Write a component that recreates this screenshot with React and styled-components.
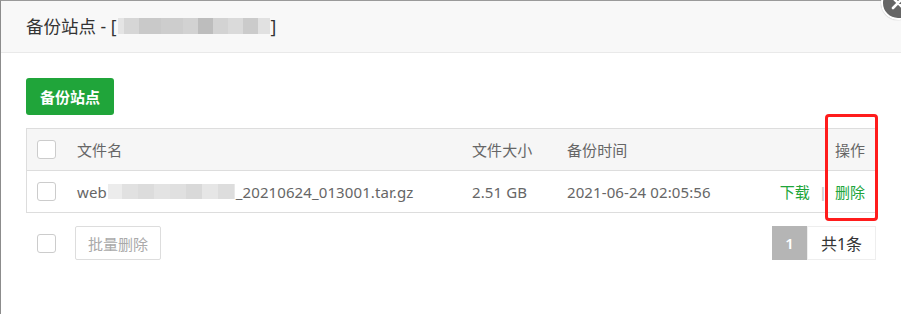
import styled, { createGlobalStyle } from "styled-components"

const GlobalStyle = createGlobalStyle`
*{
  padding: 0;
  margin: 0;
  box-sizing: border-box;
}

body {
  font-family: "Noto Sans", "Noto Sans CJK SC", sans-serif;
  color: #666;
  background: #fff;
}
`

const titleBlur = [
	[6, "#e4e4e4"],
	[15, "#d6d6d6"],
	[22, "#c9c9c9"],
	[22, "#cdcdcd"],
	[15, "#d2d2d2"],
	[15, "#bdbdbd"],
	[15, "#d3d3d3"],
	[15, "#dadada"],
	[15, "#cbcbcb"],
	[12, "#e1e1e1"],
]

const nameBlur = [
	[14, "#ececec"],
	[16, "#e1e1e1"],
	[16, "#dcdcdc"],
	[16, "#e3e3e3"],
	[16, "#e0e0e0"],
	[16, "#d9d9d9"],
	[16, "#e6e6e6"],
	[16, "#dddddd"],
	[1, "#e8e8e8"],
]

function Mosaic({ blocks, height }) {
	return (
		<MosaicWrap $h={height}>
			{blocks.map(([w, c], i) => (
				<MosaicBlock key={i} $w={w} $c={c} />
			))}
		</MosaicWrap>
	)
}

function App() {
	return (
		<Page>
			<GlobalStyle />
			<Dialog>
				<Header>
					<span>备份站点 - [</span>
					<Mosaic blocks={titleBlur} height={16} />
					<span>]</span>
				</Header>
				<Body>
					<GreenButton>备份站点</GreenButton>
					<Table>
						<Row $head>
							<CheckCell>
								<Check />
							</CheckCell>
							<Cell>文件名</Cell>
							<Cell>文件大小</Cell>
							<Cell>备份时间</Cell>
							<ActionCell>操作</ActionCell>
						</Row>
						<Row>
							<CheckCell>
								<Check />
							</CheckCell>
							<Cell>
								web
								<Mosaic blocks={nameBlur} height={15} />
								_20210624_013001.tar.gz
							</Cell>
							<Cell>2.51 GB</Cell>
							<Cell>2021-06-24 02:05:56</Cell>
							<ActionCell>
								<Link>下载</Link>
								<Sep>|</Sep>
								<Link>删除</Link>
							</ActionCell>
						</Row>
					</Table>
					<Footer>
						<FooterLeft>
							<Check />
							<GhostButton>批量删除</GhostButton>
						</FooterLeft>
						<Pager>
							<PageNum>1</PageNum>
							<PageTotal>共1条</PageTotal>
						</Pager>
					</Footer>
				</Body>
			</Dialog>
			<Highlight />
			<Close>
				<svg width="14" height="14" viewBox="0 0 14 14">
					<path d="M2 2 L12 12 M12 2 L2 12" stroke="#fff" strokeWidth="2.6" strokeLinecap="round" />
				</svg>
			</Close>
		</Page>
	)
}

export default App

const Page = styled.div`
	position: relative;
	width: 901px;
	height: 314px;
	overflow: hidden;
	background: #fff;
`

const Dialog = styled.div`
	height: 100%;
	border-top: 1px solid #9a9a9a;
	border-left: 1px solid #8c8c8c;
	background: #fff;
`

const Header = styled.div`
	display: flex;
	align-items: center;
	height: 52px;
	padding: 0 0 2px 25px;
	background: #f8f8f8;
	border-bottom: 1px solid #e9e9e9;
	font-size: 17.5px;
	color: #333;
	white-space: pre;
`

const MosaicWrap = styled.span`
	display: inline-flex;
	height: ${(p) => p.$h}px;
	margin: 0 1px;
	filter: blur(0.6px);
`

const MosaicBlock = styled.span`
	width: ${(p) => p.$w}px;
	height: 100%;
	background: ${(p) => p.$c};
`

const Body = styled.div`
	padding: 25px 25px 0 25px;
`

const GreenButton = styled.button`
	display: block;
	width: 88px;
	height: 37px;
	border: none;
	border-radius: 3px;
	background: #20a53a;
	color: #fff;
	font-family: inherit;
	font-size: 15px;
	font-weight: 600;
`

const Table = styled.div`
	margin-top: 13px;
	border: 1px solid #ddd;
`

const Row = styled.div`
	display: grid;
	grid-template-columns: 50px 395px 95px 1fr auto;
	align-items: center;
	height: ${(p) => (p.$head ? "42px" : "41px")};
	background: ${(p) => (p.$head ? "#f6f6f6" : "#fff")};
	border-bottom: ${(p) => (p.$head ? "1px solid #ddd" : "none")};
	font-size: 15px;
	color: #666;
`

const CheckCell = styled.div`
	display: flex;
	padding-left: 10px;
`

const Cell = styled.div`
	display: flex;
	align-items: center;
	white-space: nowrap;
	letter-spacing: 0.1px;
`

const ActionCell = styled.div`
	display: flex;
	align-items: center;
	justify-content: flex-end;
	padding-right: 10px;
`

const Link = styled.span`
	color: #20a53a;
`

const Sep = styled.span`
	margin: 0 8px 0 9px;
	color: #ccc;
	font-weight: 700;
`

const Check = styled.span`
	display: block;
	width: 19px;
	height: 19px;
	border: 1px solid #ccc;
	border-radius: 3px;
	background: #fff;
`

const Footer = styled.div`
	display: flex;
	justify-content: space-between;
	align-items: center;
	margin-top: 13px;
`

const FooterLeft = styled.div`
	display: flex;
	align-items: center;
	gap: 19px;
	padding-left: 11px;
`

const GhostButton = styled.button`
	width: 86px;
	height: 34px;
	border: 1px solid #ddd;
	border-radius: 2px;
	background: #fff;
	color: #aaa;
	font-family: inherit;
	font-size: 15px;
`

const Pager = styled.div`
	display: flex;
	height: 34px;
`

const PageNum = styled.span`
	display: flex;
	align-items: center;
	justify-content: center;
	width: 35px;
	background: #b5b5b5;
	color: #fff;
	font-size: 15px;
	font-weight: 600;
`

const PageTotal = styled.span`
	display: flex;
	align-items: center;
	justify-content: center;
	width: 69px;
	border: 1px solid #eee;
	color: #333;
	font-size: 16px;
`

const Highlight = styled.div`
	position: absolute;
	left: 825px;
	top: 114px;
	width: 53px;
	height: 107px;
	border: 3px solid #ff1c1c;
	border-radius: 4px;
`

const Close = styled.div`
	position: absolute;
	left: 881px;
	top: -14px;
	width: 34px;
	height: 34px;
	display: flex;
	align-items: center;
	justify-content: center;
	border-radius: 50%;
	border: 2px solid #fff;
	background: #666;
	box-shadow: 0 0 1px #999;
`
